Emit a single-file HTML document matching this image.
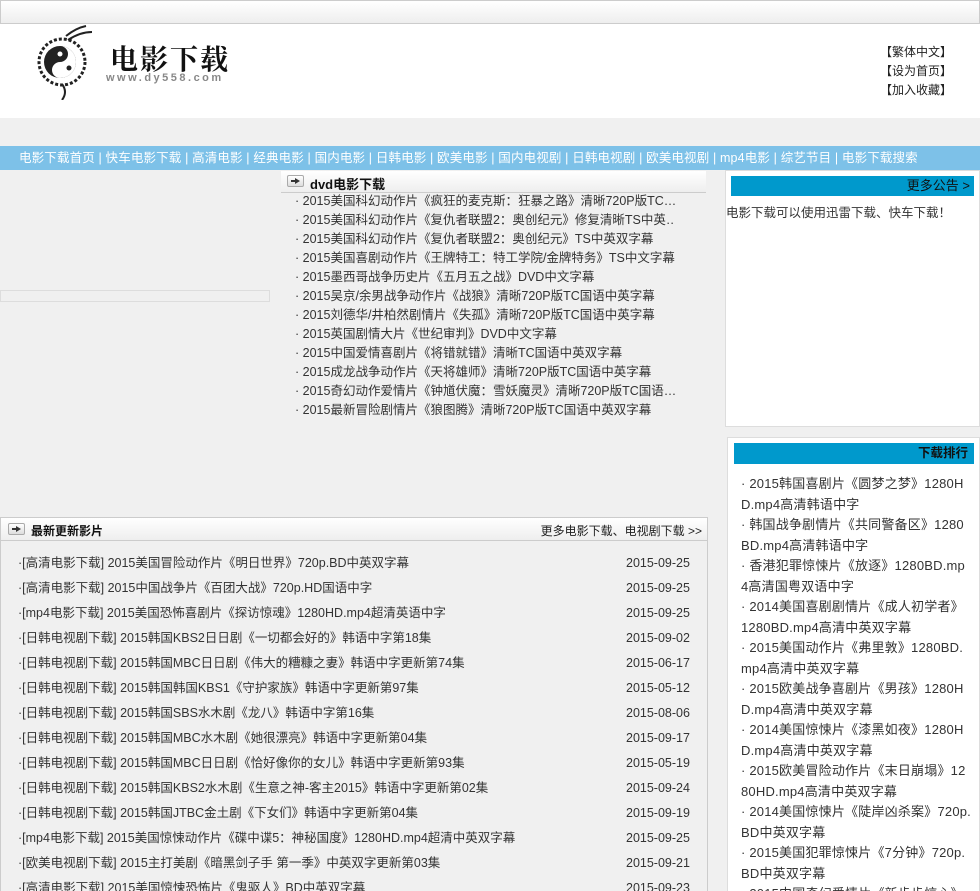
<!DOCTYPE html>
<html><head><meta charset="utf-8">
<style>
*{margin:0;padding:0;box-sizing:border-box}
html,body{width:980px;height:891px;overflow:hidden}
body{background:#f0f0f0;font-family:"Liberation Sans","Noto Sans CJK SC",sans-serif;font-size:12px;color:#333;position:relative}
.a{position:absolute}
.top{left:0;top:0;width:980px;height:24px;border:1px solid #ccc;background:linear-gradient(#fff,#eee)}
.hdr{left:0;top:24px;width:980px;height:94px;background:#fff}
.nav{left:0;top:146px;width:980px;height:24px;background:#7dc1e8;color:#fff;font-size:12.5px;line-height:24px;padding-left:19px;white-space:nowrap;letter-spacing:.15px}
.arr{display:inline-block;width:17px;height:12px;border:1px solid #aaa;border-radius:2px;background:linear-gradient(#fff,#ddd);vertical-align:middle;position:relative}
.arr:after{content:"";position:absolute;left:7px;top:2px;border-left:5px solid #333;border-top:3px solid transparent;border-bottom:3px solid transparent}
.arr:before{content:"";position:absolute;left:3px;top:4px;width:4px;height:2px;background:#333}
.dvd div{height:19px;line-height:19px;font-size:12.5px;white-space:nowrap;overflow:hidden;width:380px}
.lr{height:25px;line-height:25px;font-size:12.5px;position:relative;padding-left:17px}
.lr span{position:absolute;left:625px;top:0}
.rk div{line-height:20.5px;font-size:13px;word-break:break-all;letter-spacing:.2px}
</style></head><body>
<div class="a top"></div>
<div class="a hdr">
 <svg class="a" style="left:36px;top:0px" width="70" height="76" viewBox="0 0 70 76">
  <circle cx="26" cy="38" r="23" fill="none" stroke="#222" stroke-width="3" stroke-dasharray="3 2"/>
  <circle cx="24" cy="38" r="16" fill="#222"/>
  <path d="M24 22 A8 8 0 0 1 24 38 A8 8 0 0 0 24 54 A16 16 0 0 0 24 22Z" fill="#fff"/>
  <circle cx="24" cy="30" r="2.5" fill="#fff"/><circle cx="33" cy="44" r="2.5" fill="#222"/>
  <path d="M30 12 Q40 4 50 2 M32 16 Q44 8 56 8 M26 60 Q32 68 26 76" stroke="#222" stroke-width="2" fill="none"/>
 </svg>
 <div class="a" style="left:110px;top:14px;font-family:'Noto Serif CJK SC',serif;font-size:28px;font-weight:bold;color:#111;letter-spacing:2px">电影下载</div>
 <div class="a" style="left:106px;top:48px;font-size:11px;color:#888;letter-spacing:2.5px;font-weight:bold">www.dy558.com</div>
 <div class="a" style="left:880px;top:19px;line-height:19px;font-size:12px;color:#222">【繁体中文】<br>【设为首页】<br>【加入收藏】</div>
</div>
<div class="a nav">电影下载首页 | 快车电影下载 | 高清电影 | 经典电影 | 国内电影 | 日韩电影 | 欧美电影 | 国内电视剧 | 日韩电视剧 | 欧美电视剧 | mp4电影 | 综艺节目 | 电影下载搜索</div>
<div class="a" style="left:0;top:290px;width:270px;height:12px;border:1px solid #ddd"></div>
<div class="a" style="left:281px;top:171px;width:425px;height:22px;background:linear-gradient(#fff,#eee);border-bottom:1px solid #ccc">
 <span class="arr" style="position:absolute;left:6px;top:4px"></span>
 <b style="position:absolute;left:29px;top:3px;font-size:13px;color:#111">dvd电影下载</b>
</div>
<div class="a dvd" style="left:295px;top:192px">
<div>· 2015美国科幻动作片《疯狂的麦克斯：狂暴之路》清晰720P版TC…</div>
<div>· 2015美国科幻动作片《复仇者联盟2：奥创纪元》修复清晰TS中英…</div>
<div>· 2015美国科幻动作片《复仇者联盟2：奥创纪元》TS中英双字幕</div>
<div>· 2015美国喜剧动作片《王牌特工：特工学院/金牌特务》TS中文字幕</div>
<div>· 2015墨西哥战争历史片《五月五之战》DVD中文字幕</div>
<div>· 2015吴京/余男战争动作片《战狼》清晰720P版TC国语中英字幕</div>
<div>· 2015刘德华/井柏然剧情片《失孤》清晰720P版TC国语中英字幕</div>
<div>· 2015英国剧情大片《世纪审判》DVD中文字幕</div>
<div>· 2015中国爱情喜剧片《将错就错》清晰TC国语中英双字幕</div>
<div>· 2015成龙战争动作片《天将雄师》清晰720P版TC国语中英字幕</div>
<div>· 2015奇幻动作爱情片《钟馗伏魔：雪妖魔灵》清晰720P版TC国语…</div>
<div>· 2015最新冒险剧情片《狼图腾》清晰720P版TC国语中英双字幕</div>
</div>
<div class="a" style="left:725px;top:170px;width:255px;height:257px;background:#fff;border:1px solid #ddd">
 <div style="position:absolute;left:5px;top:5px;width:243px;height:20px;background:#0099cc;text-align:right;padding-right:4px;font-size:13px;line-height:20px;color:#111">更多公告 &gt;</div>
 <div style="position:absolute;left:0;top:31px;font-size:12.5px;color:#333">电影下载可以使用迅雷下载、快车下载！</div>
</div>
<div class="a" style="left:727px;top:437px;width:253px;height:460px;background:#fff;border:1px solid #ddd">
 <div style="position:absolute;left:6px;top:5px;width:240px;height:21px;background:#0099cc;text-align:right;padding-right:6px;font-size:12.5px;font-weight:bold;line-height:21px;color:#111">下载排行</div>
 <div class="rk" style="position:absolute;left:13px;top:36px;width:230px;color:#333">
 <div>· 2015韩国喜剧片《圆梦之梦》1280HD.mp4高清韩语中字</div>
 <div>· 韩国战争剧情片《共同警备区》1280BD.mp4高清韩语中字</div>
 <div>· 香港犯罪惊悚片《放逐》1280BD.mp4高清国粤双语中字</div>
 <div>· 2014美国喜剧剧情片《成人初学者》1280BD.mp4高清中英双字幕</div>
 <div>· 2015美国动作片《弗里敦》1280BD.mp4高清中英双字幕</div>
 <div>· 2015欧美战争喜剧片《男孩》1280HD.mp4高清中英双字幕</div>
 <div>· 2014美国惊悚片《漆黑如夜》1280HD.mp4高清中英双字幕</div>
 <div>· 2015欧美冒险动作片《末日崩塌》1280HD.mp4高清中英双字幕</div>
 <div>· 2014美国惊悚片《陡岸凶杀案》720p.BD中英双字幕</div>
 <div>· 2015美国犯罪惊悚片《7分钟》720p.BD中英双字幕</div>
 <div>· 2015中国奇幻爱情片《新步步惊心》TC</div>
 </div>
</div>
<div class="a" style="left:0;top:517px;width:708px;height:380px;border:1px solid #ccc">
 <div style="position:absolute;left:0;top:0;width:706px;height:23px;background:linear-gradient(#fff,#eee);border-bottom:1px solid #ccc">
  <span class="arr" style="position:absolute;left:7px;top:5px"></span>
  <b style="position:absolute;left:30px;top:4px;font-size:12px;color:#111">最新更新影片</b>
  <span style="position:absolute;right:5px;top:4px;font-size:12px;color:#222">更多电影下载、电视剧下载 &gt;&gt;</span>
 </div>
 <div style="position:absolute;left:0;top:33px;width:706px">
 <div class="lr">·[高清电影下载] 2015美国冒险动作片《明日世界》720p.BD中英双字幕<span>2015-09-25</span></div>
 <div class="lr">·[高清电影下载] 2015中国战争片《百团大战》720p.HD国语中字<span>2015-09-25</span></div>
 <div class="lr">·[mp4电影下载] 2015美国恐怖喜剧片《探访惊魂》1280HD.mp4超清英语中字<span>2015-09-25</span></div>
 <div class="lr">·[日韩电视剧下载] 2015韩国KBS2日日剧《一切都会好的》韩语中字第18集<span>2015-09-02</span></div>
 <div class="lr">·[日韩电视剧下载] 2015韩国MBC日日剧《伟大的糟糠之妻》韩语中字更新第74集<span>2015-06-17</span></div>
 <div class="lr">·[日韩电视剧下载] 2015韩国韩国KBS1《守护家族》韩语中字更新第97集<span>2015-05-12</span></div>
 <div class="lr">·[日韩电视剧下载] 2015韩国SBS水木剧《龙八》韩语中字第16集<span>2015-08-06</span></div>
 <div class="lr">·[日韩电视剧下载] 2015韩国MBC水木剧《她很漂亮》韩语中字更新第04集<span>2015-09-17</span></div>
 <div class="lr">·[日韩电视剧下载] 2015韩国MBC日日剧《恰好像你的女儿》韩语中字更新第93集<span>2015-05-19</span></div>
 <div class="lr">·[日韩电视剧下载] 2015韩国KBS2水木剧《生意之神-客主2015》韩语中字更新第02集<span>2015-09-24</span></div>
 <div class="lr">·[日韩电视剧下载] 2015韩国JTBC金土剧《下女们》韩语中字更新第04集<span>2015-09-19</span></div>
 <div class="lr">·[mp4电影下载] 2015美国惊悚动作片《碟中谍5：神秘国度》1280HD.mp4超清中英双字幕<span>2015-09-25</span></div>
 <div class="lr">·[欧美电视剧下载] 2015主打美剧《暗黑剑子手 第一季》中英双字更新第03集<span>2015-09-21</span></div>
 <div class="lr">·[高清电影下载] 2015美国惊悚恐怖片《鬼驱人》BD中英双字幕<span>2015-09-23</span></div>
 </div>
</div>
</body></html>
